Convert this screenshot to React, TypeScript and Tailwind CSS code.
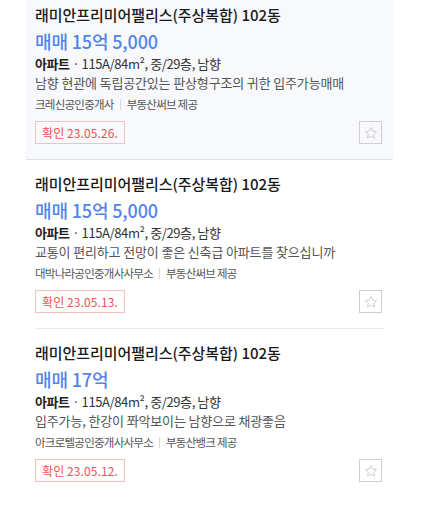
import React from "react";

type Item = {
  price: string;
  desc: string;
  agent: string;
  provider: string;
  date: string;
  active?: boolean;
};

const items: Item[] = [
  {
    price: "매매 15억 5,000",
    desc: "남향 현관에 독립공간있는 판상형구조의 귀한 입주가능매매",
    agent: "크레신공인중개사",
    provider: "부동산써브 제공",
    date: "확인 23.05.26.",
    active: true,
  },
  {
    price: "매매 15억 5,000",
    desc: "교통이 편리하고 전망이 좋은 신축급 아파트를 찾으십니까",
    agent: "대박나라공인중개사사무소",
    provider: "부동산써브 제공",
    date: "확인 23.05.13.",
  },
  {
    price: "매매 17억",
    desc: "입주가능, 한강이 쫘악보이는 남향으로 채광좋음",
    agent: "아크로텔공인중개사사무소",
    provider: "부동산뱅크 제공",
    date: "확인 23.05.12.",
  },
];

function Star() {
  return (
    <svg width="14" height="14" viewBox="0 0 24 24" fill="none" stroke="#c8c8c8" strokeWidth="1.5" strokeLinejoin="round">
      <path d="M12 2.5l2.9 6.2 6.7.8-5 4.6 1.4 6.7L12 17.4l-6 3.4 1.4-6.7-5-4.6 6.7-.8z" />
    </svg>
  );
}

function Card({ item, top, divider }: { item: Item; top: boolean; divider: boolean }) {
  const content = (
    <div className={`${top ? "pt-[4px]" : "pt-[13px]"} pb-[15px]`}>
      <div className="text-[15px] leading-[22px] font-medium text-[#1a1a1a] tracking-[-0.05px]">
        래미안프리미어팰리스(주상복합) 102동
      </div>
      <div className="mt-[2px] text-[18px] leading-[26px] font-medium text-[#5484ea] tracking-[-0.15px]">
        {item.price}
      </div>
      <div className="text-[13px] leading-[19px] text-[#333] tracking-[-0.4px]">
        <span className="font-bold text-[#222]">아파트</span> · 115A/84m², 중/29층, 남향
      </div>
      <div className="text-[13px] leading-[19px] text-[#555] tracking-[-0.15px]">{item.desc}</div>
      <div className="mt-[3px] flex items-center text-[11.5px] leading-[18px] text-[#555] tracking-[-0.75px]">
        <span>{item.agent}</span>
        <span className="mx-[6px] h-[11px] w-px bg-[#dadada]" />
        <span className="whitespace-pre">{item.provider}</span>
      </div>
      <div className="mt-[8px] flex items-center justify-between">
        <div className="h-[23px] border border-[#f5c2c2] px-[6px] flex items-center text-[12px] text-[#f05252] tracking-[0.1px]">
          {item.date}
        </div>
        <div className="mr-[2px] h-[23px] w-[23px] border border-[#cfcfcf] flex items-center justify-center">
          <Star />
        </div>
      </div>
    </div>
  );
  if (item.active) {
    return (
      <div className="bg-[#f8f9fc] border-b border-[#dfe4ec] px-[9px]">{content}</div>
    );
  }
  return (
    <div className="px-[9px]">
      <div className={divider ? "border-t border-[#e8e8e8]" : ""}>{content}</div>
    </div>
  );
}

export default function App() {
  return (
    <div
      className="w-[427px] h-[510px] bg-white overflow-hidden"
      style={{ fontFamily: '"Noto Sans CJK KR", "Noto Sans", sans-serif' }}
    >
      <div className="ml-[26px] w-[367px]">
        {items.map((it, i) => (
          <Card
            key={i}
            item={it}
            top={i === 0}
            divider={i > 0 && !items[i - 1].active}
          />
        ))}
      </div>
    </div>
  );
}
